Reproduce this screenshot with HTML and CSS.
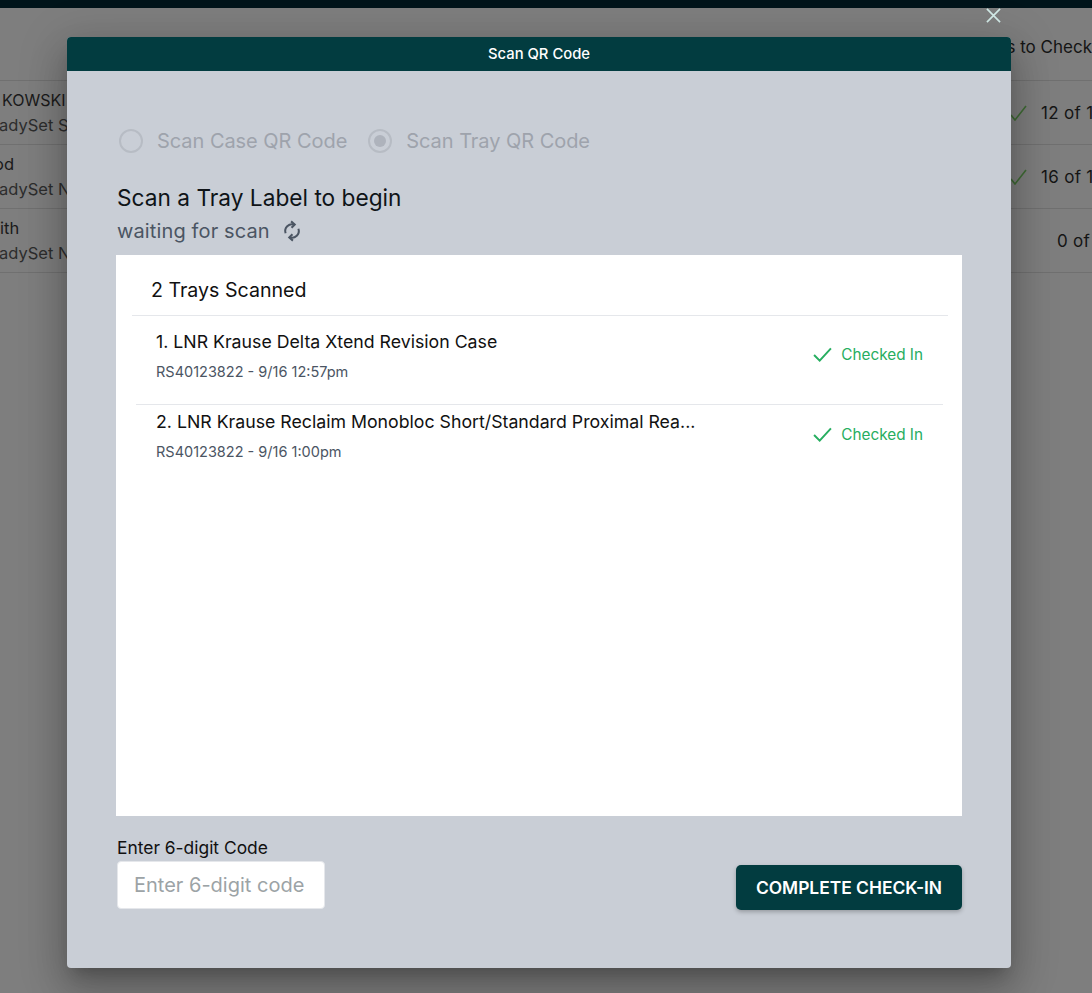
FILE: index.html
```html
<!DOCTYPE html>
<html lang="en">
<head>
<meta charset="utf-8">
<title>Scan QR Code</title>
<link rel="stylesheet" href="styles.css">
</head>
<body>
<div class="page">
  <div class="topbar"></div>
  <div class="bg-head"><span class="bg-head-label">s to Check</span></div>
  <div class="bg-row">
    <div class="bg-left"><div class="bg-name bg-name-kow">KOWSKI</div><div class="bg-sub">adySet S</div></div>
    <div class="bg-right">
      <svg class="bg-check" viewBox="0 0 18 16"><path d="M1 10 L5 15 L16 1"/></svg>
      <span>12 of 1</span>
    </div>
  </div>
  <div class="bg-row">
    <div class="bg-left"><div class="bg-name bg-name-od">od</div><div class="bg-sub">adySet N</div></div>
    <div class="bg-right">
      <svg class="bg-check" viewBox="0 0 18 16"><path d="M1 10 L5 15 L16 1"/></svg>
      <span>16 of 1</span>
    </div>
  </div>
  <div class="bg-row">
    <div class="bg-left"><div class="bg-name">ith</div><div class="bg-sub">adySet N</div></div>
    <div class="bg-right bg-right-plain"><span>0 of</span></div>
  </div>
</div>

<svg class="close" viewBox="0 0 16 16"><path d="M1 1 L15 15 M15 1 L1 15"/></svg>

<main class="modal">
  <header class="modal-head">Scan QR Code</header>
  <div class="modal-body">
    <div class="radios">
      <label class="radio"><span class="radio-dot"></span><span>Scan Case QR Code</span></label>
      <label class="radio"><span class="radio-dot radio-dot-on"></span><span>Scan Tray QR Code</span></label>
    </div>
    <h1 class="title">Scan a Tray Label to begin</h1>
    <div class="waiting">
      <span>waiting for scan</span>
      <svg class="sync" viewBox="0 0 24 24"><path d="M14.5 5 A7.5 7.5 0 0 0 5 14.5"/><path d="M11 1.5 L15 5 L11.5 8.5"/><path d="M9.5 19 A7.5 7.5 0 0 0 19 9.5"/><path d="M13 22.5 L9 19 L12.5 15.5"/></svg>
    </div>
    <section class="panel">
      <h2 class="panel-head">2 Trays Scanned</h2>
      <div class="list">
        <div class="tray">
          <div class="tray-info">
            <div class="tray-name">1. LNR Krause Delta Xtend Revision Case</div>
            <div class="tray-meta">RS40123822 - 9/16 12:57pm</div>
          </div>
          <div class="status">
            <svg class="status-check" viewBox="0 0 20 16"><path d="M1 8.5 L7 14.5 L19 1.5"/></svg>
            <span>Checked In</span>
          </div>
        </div>
        <div class="tray">
          <div class="tray-info">
            <div class="tray-name">2. LNR Krause Reclaim Monobloc Short/Standard Proximal Rea...</div>
            <div class="tray-meta">RS40123822 - 9/16 1:00pm</div>
          </div>
          <div class="status">
            <svg class="status-check" viewBox="0 0 20 16"><path d="M1 8.5 L7 14.5 L19 1.5"/></svg>
            <span>Checked In</span>
          </div>
        </div>
      </div>
    </section>
    <div class="footer">
      <div class="code">
        <label class="code-label" for="code">Enter 6-digit Code</label>
        <input class="code-input" id="code" type="text" placeholder="Enter 6-digit code">
      </div>
      <button class="submit" type="button">COMPLETE CHECK-IN</button>
    </div>
  </div>
</main>
</body>
</html>
```
FILE: styles.css
```css
* { box-sizing: border-box; }
html, body { margin: 0; height: 100%; }
body {
  background: #7e7e7e;
  font-family: Inter, "Noto Sans", sans-serif;
  overflow: hidden;
  position: relative;
  color: #101418;
}
.page { width: 100%; }
.topbar { height: 8px; background: #00141a; }
.bg-head {
  height: 73px;
  border-bottom: 1px solid #707070;
  display: flex;
  justify-content: flex-end;
  padding-top: 29px;
  font-size: 17px;
  line-height: 20px;
  color: #151515;
  white-space: nowrap;
}
.bg-head-label { flex: none; }
.bg-row {
  height: 64px;
  border-bottom: 1px solid #707070;
  display: flex;
  justify-content: space-between;
}
.bg-left { padding-top: 8px; color: #1a1a1a; white-space: nowrap; font-size: 16.5px; }
.bg-name { line-height: 22px; }
.bg-name-kow { margin-left: 2px; font-size: 16px; }
.bg-name-od { margin-left: -6px; }
.bg-sub { line-height: 22px; margin-top: 3px; margin-left: -1px; color: #2d2d2d; }
.bg-right {
  width: 82px;
  flex: none;
  display: flex;
  align-items: center;
  gap: 13px;
  font-size: 17px;
  letter-spacing: .3px;
  color: #151515;
  white-space: nowrap;
}
.bg-right-plain { padding-left: 47px; }
.bg-check { width: 18px; height: 16px; flex: none; fill: none; stroke: #3f6b35; stroke-width: 1.6; }
.close {
  position: absolute;
  left: 986px;
  top: 8px;
  width: 15px;
  height: 15px;
  fill: none;
  stroke: #d3ebe8;
  stroke-width: 1.8;
}
.modal {
  position: absolute;
  left: 67px;
  top: 37px;
  width: 944px;
  height: 931px;
  background: #c9ced6;
  border-radius: 4px;
  display: flex;
  flex-direction: column;
  box-shadow: 0 11px 15px -7px rgba(0,0,0,.22), 0 24px 38px 3px rgba(0,0,0,.16), 0 9px 46px 8px rgba(0,0,0,.14);
}
.modal-head {
  height: 34px;
  flex: none;
  background: #023c40;
  color: #fff;
  font-size: 14.8px;
  font-weight: 500;
  border-radius: 4px 4px 0 0;
  padding-bottom: 1px;
  display: flex;
  align-items: center;
  justify-content: center;
}
.modal-body {
  flex: 1;
  padding: 54px 49px 0;
  display: flex;
  flex-direction: column;
}
.radios { display: flex; gap: 21px; height: 32px; padding-left: 3px; }
.radio { display: flex; align-items: center; gap: 14px; font-size: 20px; color: #9ea3ac; letter-spacing: -.05px; }
.radio-dot {
  width: 24px;
  height: 24px;
  border-radius: 50%;
  border: 2.5px solid #b7bcc4;
  flex: none;
  display: flex;
  align-items: center;
  justify-content: center;
}
.radio-dot-on::after {
  content: "";
  width: 12px;
  height: 12px;
  border-radius: 50%;
  background: #aeb3bc;
}
.title {
  margin: 26px 0 0 1px;
  font-size: 22.7px;
  font-weight: 400;
  line-height: 30px;
  color: #0f1418;
}
.waiting {
  margin: 4px 0 10px 1px;
  height: 28px;
  display: flex;
  align-items: center;
  gap: 11px;
  font-size: 20px;
  letter-spacing: .13px;
  color: #4b5563;
}
.sync { width: 22px; height: 22px; fill: none; stroke: #4b5563; stroke-width: 2.2; }
.panel {
  width: 846px;
  height: 561px;
  flex: none;
  background: #fff;
  display: flex;
  flex-direction: column;
}
.panel-head {
  margin: 0 14px 0 16px;
  padding: 0 0 0 19px;
  height: 61px;
  border-bottom: 1px solid #e5e7eb;
  font-size: 19.6px;
  font-weight: 400;
  line-height: 71px;
  color: #111;
}
.list { padding-top: 9px; }
.tray {
  margin: 0 19px 0 20px;
  padding: 0 20px;
  height: 80px;
  display: flex;
  justify-content: space-between;
  border-bottom: 1px solid #e5e7eb;
}
.tray:last-child { border-bottom: 0; }
.tray-info { padding-top: 5px; }
.tray-name { font-size: 17.73px; line-height: 24px; color: #111; white-space: nowrap; }
.tray-meta { font-size: 14.5px; line-height: 20px; margin-top: 8px; color: #4b5563; }
.status {
  display: flex;
  align-items: center;
  gap: 9px;
  height: 20px;
  margin-top: 19px;
  font-size: 15.3px;
  color: #27ae60;
}
.status-check { width: 19px; height: 15px; fill: none; stroke: #27ae60; stroke-width: 2.1; }
.footer {
  display: flex;
  justify-content: space-between;
  align-items: flex-end;
  padding: 0 0 0 1px;
  width: 846px;
  height: 93px;
}
.code { display: flex; flex-direction: column; }
.code-label { font-size: 17.4px; line-height: 22px; color: #111; }
.code-input {
  width: 208px;
  height: 48px;
  margin-top: 2px;
  border: 1px solid #e5e7eb;
  border-radius: 4px;
  padding: 0 16px;
  background: #fff;
  font: 400 20px Inter, "Noto Sans", sans-serif;
}
.code-input::placeholder { color: #9ca3a6; opacity: 1; }
.submit {
  width: 226px;
  height: 45px;
  margin-bottom: -1px;
  border: 0;
  border-radius: 5px;
  background: #023c40;
  color: #fff;
  font: 600 17.4px Inter, "Noto Sans", sans-serif;
  box-shadow: 0 2px 4px rgba(0,0,0,.25);
}
```
